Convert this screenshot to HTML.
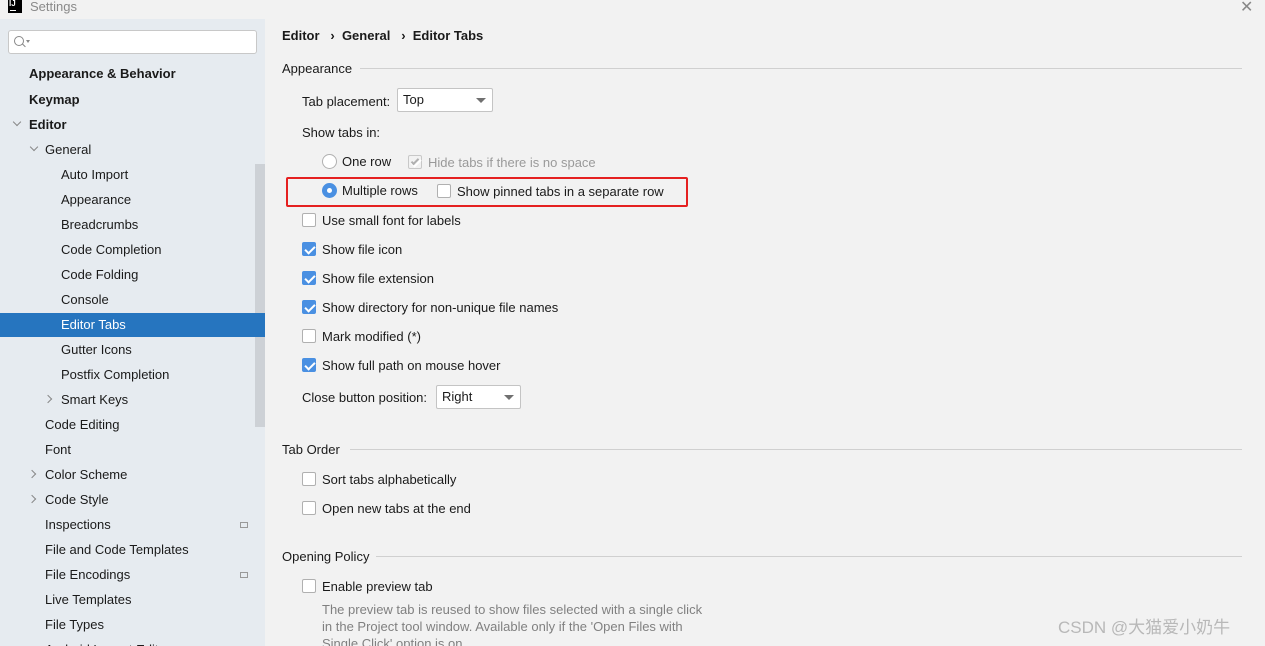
<!DOCTYPE html>
<html><head><meta charset="utf-8"><style>
*{margin:0;padding:0;box-sizing:border-box}
html{width:1265px;height:646px;overflow:hidden}
body{width:1265px;height:646px;overflow:hidden;background:#f2f2f2;font-family:"Liberation Sans","Noto Sans CJK SC",sans-serif;font-size:13px;color:#1a1a1a;position:relative}
.a{position:absolute;white-space:nowrap}
#side{position:absolute;left:0;top:19px;width:265px;height:627px;background:#e6ebf0}
.t{position:absolute;line-height:25px;height:25px}
.b{font-weight:bold}
.cb{position:absolute;width:14px;height:14px;border:1px solid #b0b0b0;border-radius:2px;background:#fff}
.cb.on{background:#4a90e2;border-color:#4a90e2}
.cb.on:after{content:"";position:absolute;left:4px;top:1px;width:4px;height:8px;border:solid #fff;border-width:0 2px 2px 0;transform:rotate(45deg)}
.lbl{position:absolute;line-height:16px;margin-top:1px}
.sep{position:absolute;height:1px;background:#d0d0d0}
.dd{position:absolute;height:24px;border:1px solid #c4c4c4;border-radius:2px;background:#fff;padding-left:5px;line-height:22px}
.dd:after{content:"";position:absolute;right:6px;top:9px;border:5px solid transparent;border-top:5px solid #707070;border-bottom:0}
.chev{position:absolute;width:6px;height:6px;border:solid #888;border-width:0 1px 1px 0}
</style></head><body>
<div class="a" style="left:8px;top:0;width:14px;height:13px;background:#000"></div>
<div class="a" style="left:9px;top:0;color:#fff;font-size:8px;font-weight:bold;line-height:8px">IJ</div>
<div class="a" style="left:10px;top:10px;width:6px;height:1px;background:#fff"></div>
<div class="a" style="left:30px;top:-1px;color:#8a8a8a;line-height:16px">Settings</div>
<div class="a" style="left:1240px;top:-3px;color:#888;font-size:16px">✕</div>
<div id="side">
<div class="a" style="left:8px;top:11px;width:249px;height:24px;background:#fff;border:1px solid #c8c8c8;border-radius:3px"></div>
<div class="a" style="left:14px;top:17px;width:10px;height:10px;border:1px solid #888;border-radius:50%"></div>
<div class="a" style="left:22px;top:26px;width:4px;height:1px;background:#888;transform:rotate(45deg)"></div>
<div class="a" style="left:26px;top:21px;border:2px solid transparent;border-top:3px solid #888"></div>
<div class="a" style="left:255px;top:145px;width:10px;height:263px;background:#cdd1d6"></div>
<div class="a" style="left:0;top:294px;width:265px;height:24px;background:#2675bf"></div>
<div class="a" style="left:240px;top:503px;width:8px;height:6px;border:1px solid #999"></div>
<div class="a" style="left:240px;top:553px;width:8px;height:6px;border:1px solid #999"></div>
</div>
<div class="t b" style="left:29px;top:61px">Appearance &amp; Behavior</div>
<div class="t b" style="left:29px;top:87px">Keymap</div>
<div class="chev" style="left:14px;top:119px;transform:rotate(45deg)"></div>
<div class="t b" style="left:29px;top:112px">Editor</div>
<div class="chev" style="left:31px;top:144px;transform:rotate(45deg)"></div>
<div class="t" style="left:45px;top:137px">General</div>
<div class="t" style="left:61px;top:162px">Auto Import</div>
<div class="t" style="left:61px;top:187px">Appearance</div>
<div class="t" style="left:61px;top:212px">Breadcrumbs</div>
<div class="t" style="left:61px;top:237px">Code Completion</div>
<div class="t" style="left:61px;top:262px">Code Folding</div>
<div class="t" style="left:61px;top:287px">Console</div>
<div class="t" style="left:61px;top:312px;color:#fff">Editor Tabs</div>
<div class="t" style="left:61px;top:337px">Gutter Icons</div>
<div class="t" style="left:61px;top:362px">Postfix Completion</div>
<div class="chev" style="left:45px;top:396px;transform:rotate(-45deg)"></div>
<div class="t" style="left:61px;top:387px">Smart Keys</div>
<div class="t" style="left:45px;top:412px">Code Editing</div>
<div class="t" style="left:45px;top:437px">Font</div>
<div class="chev" style="left:29px;top:471px;transform:rotate(-45deg)"></div>
<div class="t" style="left:45px;top:462px">Color Scheme</div>
<div class="chev" style="left:29px;top:496px;transform:rotate(-45deg)"></div>
<div class="t" style="left:45px;top:487px">Code Style</div>
<div class="t" style="left:45px;top:512px">Inspections</div>
<div class="t" style="left:45px;top:537px">File and Code Templates</div>
<div class="t" style="left:45px;top:562px">File Encodings</div>
<div class="t" style="left:45px;top:587px">Live Templates</div>
<div class="t" style="left:45px;top:612px">File Types</div>
<div class="t" style="left:45px;top:637px">Android Layout Editor</div>

<div class="a b" style="left:282px;top:28px;line-height:16px">Editor &nbsp;&nbsp;› &nbsp;General &nbsp;&nbsp;› &nbsp;Editor Tabs</div>
<div class="lbl" style="left:282px;top:60px">Appearance</div><div class="sep" style="left:360px;top:68px;width:882px"></div>
<div class="lbl" style="left:302px;top:93px">Tab placement:</div>
<div class="dd" style="left:397px;top:88px;width:96px">Top</div>
<div class="lbl" style="left:302px;top:124px">Show tabs in:</div>
<div class="a" style="left:322px;top:154px;width:15px;height:15px;border:1px solid #b0b0b0;border-radius:50%;background:#fff"></div>
<div class="lbl" style="left:342px;top:153px">One row</div>
<div class="cb on" style="left:408px;top:155px;background:#f2f2f2;border-color:#c8c8c8"></div>
<div class="a" style="left:413px;top:157px;width:4px;height:8px;border:solid #b0b0b0;border-width:0 2px 2px 0;transform:rotate(45deg)"></div>
<div class="lbl" style="left:428px;top:154px;color:#9a9a9a">Hide tabs if there is no space</div>
<div class="a" style="left:286px;top:177px;width:402px;height:30px;border:2px solid #e52020;border-radius:2px"></div>
<div class="a" style="left:322px;top:183px;width:15px;height:15px;border-radius:50%;background:#4a90e2"></div>
<div class="a" style="left:327px;top:188px;width:5px;height:5px;border-radius:50%;background:#fff"></div>
<div class="lbl" style="left:342px;top:182px">Multiple rows</div>
<div class="cb" style="left:437px;top:184px"></div>
<div class="lbl" style="left:457px;top:183px">Show pinned tabs in a separate row</div>
<div class="cb" style="left:302px;top:213px"></div><div class="lbl" style="left:322px;top:212px">Use small font for labels</div>
<div class="cb on" style="left:302px;top:242px"></div><div class="lbl" style="left:322px;top:241px">Show file icon</div>
<div class="cb on" style="left:302px;top:271px"></div><div class="lbl" style="left:322px;top:270px">Show file extension</div>
<div class="cb on" style="left:302px;top:300px"></div><div class="lbl" style="left:322px;top:299px">Show directory for non-unique file names</div>
<div class="cb" style="left:302px;top:329px"></div><div class="lbl" style="left:322px;top:328px">Mark modified (*)</div>
<div class="cb on" style="left:302px;top:358px"></div><div class="lbl" style="left:322px;top:357px">Show full path on mouse hover</div>
<div class="lbl" style="left:302px;top:389px">Close button position:</div>
<div class="dd" style="left:436px;top:385px;width:85px">Right</div>
<div class="lbl" style="left:282px;top:441px">Tab Order</div><div class="sep" style="left:350px;top:449px;width:892px"></div>
<div class="cb" style="left:302px;top:472px"></div><div class="lbl" style="left:322px;top:471px">Sort tabs alphabetically</div>
<div class="cb" style="left:302px;top:501px"></div><div class="lbl" style="left:322px;top:500px">Open new tabs at the end</div>
<div class="lbl" style="left:282px;top:548px">Opening Policy</div><div class="sep" style="left:376px;top:556px;width:866px"></div>
<div class="cb" style="left:302px;top:579px"></div><div class="lbl" style="left:322px;top:578px">Enable preview tab</div>
<div class="lbl" style="left:322px;top:600px;color:#808080;line-height:17px;white-space:normal;width:400px">The preview tab is reused to show files selected with a single click<br>in the Project tool window. Available only if the 'Open Files with<br>Single Click' option is on.</div>
<div class="a" style="left:1058px;top:617px;font-size:17px;color:#b8b8b8;line-height:22px">CSDN @大猫爱小奶牛</div>
</body></html>
